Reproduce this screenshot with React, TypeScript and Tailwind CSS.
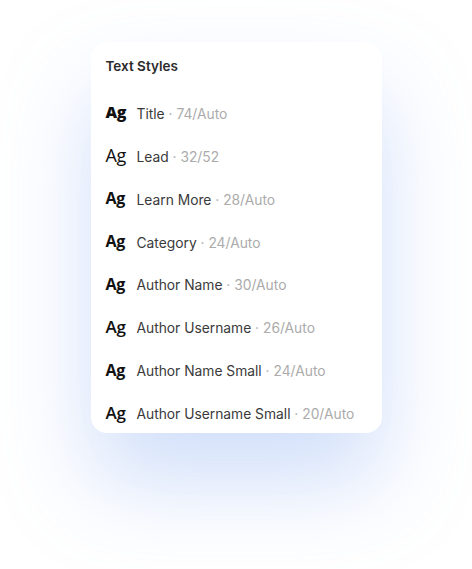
const styles = [
  { name: "Title", meta: "74/Auto", ag: "text-[16px] font-extrabold" },
  { name: "Lead", meta: "32/52", ag: "text-[18px] font-normal" },
  { name: "Learn More", meta: "28/Auto", ag: "text-[16px] font-bold" },
  { name: "Category", meta: "24/Auto", ag: "text-[16px] font-bold" },
  { name: "Author Name", meta: "30/Auto", ag: "text-[16px] font-bold" },
  { name: "Author Username", meta: "26/Auto", ag: "text-[17px] font-semibold" },
  { name: "Author Name Small", meta: "24/Auto", ag: "text-[16px] font-bold" },
  { name: "Author Username Small", meta: "20/Auto", ag: "text-[17px] font-semibold" },
];

export default function App() {
  return (
    <div className="flex min-h-[569px] justify-center bg-white pt-[42px] font-['Inter',sans-serif]">
      <div className="h-[391px] w-[291px] overflow-hidden rounded-[16px] bg-white px-[15px] pt-[15px] shadow-[0_50px_90px_rgba(120,160,240,0.34)]">
        <h2 className="text-[13.5px] font-semibold leading-[18px] text-[#2b2b2b]">Text Styles</h2>
        <ul className="mt-[17px]">
          {styles.map((s) => (
            <li key={s.name} className="flex h-[42.86px] items-center">
              <span
                className={`w-[31px] shrink-0 pb-[2px] font-['Open_Sans',sans-serif] leading-none tracking-[-0.02em] text-[#111] ${s.ag}`}
              >
                Ag
              </span>
              <span className="pt-[3px] text-[13.8px] leading-none text-[#3a3a3a]">
                {s.name}
                <span className="text-[#ababab]"> · {s.meta}</span>
              </span>
            </li>
          ))}
        </ul>
      </div>
    </div>
  );
}
